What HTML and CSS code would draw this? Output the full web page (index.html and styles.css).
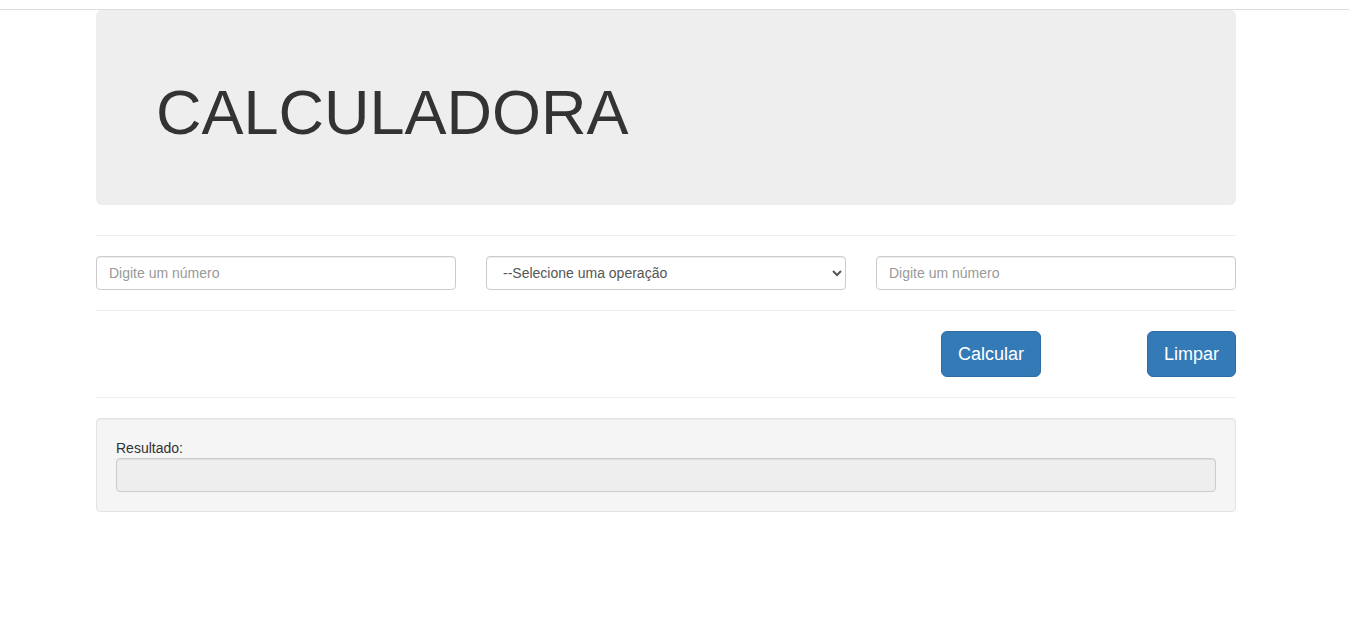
FILE: index.html
```html
<!DOCTYPE html>
<html lang="pt-BR">
<head>
<meta charset="utf-8">
<title>Calculadora</title>
<link rel="stylesheet" href="styles.css">
</head>
<body>
<div class="topbar"></div>
<div class="page">
  <div class="container">
    <div class="jumbotron">
      <h1>CALCULADORA</h1>
    </div>
    <hr class="sep">
    <div class="row-3">
      <input class="form-control" type="text" placeholder="Digite um número">
      <select class="form-control select">
        <option>--Selecione uma operação</option>
      </select>
      <input class="form-control" type="text" placeholder="Digite um número">
    </div>
    <hr class="sep">
    <div class="row-btns">
      <div class="cell-right"><button class="btn">Calcular</button></div>
      <div class="cell-right"><button class="btn">Limpar</button></div>
    </div>
    <hr class="sep">
    <div class="well">
      <label class="label">Resultado:</label>
      <input class="form-control disabled" type="text" disabled>
    </div>
  </div>
</div>
</body>
</html>
```
FILE: styles.css
```css
* { box-sizing: border-box; }
html, body { margin: 0; padding: 0; }
body {
  font-family: "Liberation Sans", Arial, sans-serif;
  font-size: 14px;
  line-height: 1.42857143;
  color: #333;
  background: #fff;
}
.topbar {
  height: 10px;
  border-bottom: 1px solid #dcdcdc;
}
.page {
  padding-right: 17px;
}
.container {
  width: 1170px;
  margin: 0 auto;
  padding: 0 15px;
}
.jumbotron {
  background: #eee;
  border-radius: 6px;
  padding: 48px 60px;
  margin-bottom: 30px;
}
.jumbotron h1 {
  margin: 20px 0 10px;
  font-size: 63px;
  line-height: 1.1;
  font-weight: 400;
  color: #333;
}
.sep {
  margin: 20px 0;
  border: 0;
  border-top: 1px solid #eee;
  height: 0;
}
.jumbotron + .sep { margin-top: 30px; }
.row-3 {
  display: grid;
  grid-template-columns: 1fr 1fr 1fr;
  column-gap: 30px;
}
.form-control {
  display: block;
  width: 100%;
  height: 34px;
  padding: 6px 12px;
  font-family: inherit;
  font-size: 14px;
  line-height: 1.42857143;
  color: #555;
  background: #fff;
  border: 1px solid #ccc;
  border-radius: 4px;
  box-shadow: inset 0 1px 1px rgba(0,0,0,.075);
  margin: 0;
}
.form-control::placeholder { color: #999; }
.select { padding: 6px 12px; }
.row-btns {
  display: grid;
  grid-template-columns: 1fr 165px;
  column-gap: 30px;
}
.cell-right { text-align: right; }
.btn {
  display: inline-block;
  font-family: inherit;
  font-size: 18px;
  line-height: 1.3333333;
  padding: 10px 16px;
  border-radius: 6px;
  color: #fff;
  background: #337ab7;
  border: 1px solid #2e6da4;
  cursor: pointer;
  margin: 0;
}
.well {
  min-height: 20px;
  padding: 19px;
  margin-bottom: 20px;
  background: #f5f5f5;
  border: 1px solid #e3e3e3;
  border-radius: 4px;
  box-shadow: inset 0 1px 1px rgba(0,0,0,.05);
}
.label {
  display: block;
  font-weight: 400;
  color: #333;
}
.form-control.disabled {
  background: #eee;
  opacity: 1;
}
```
